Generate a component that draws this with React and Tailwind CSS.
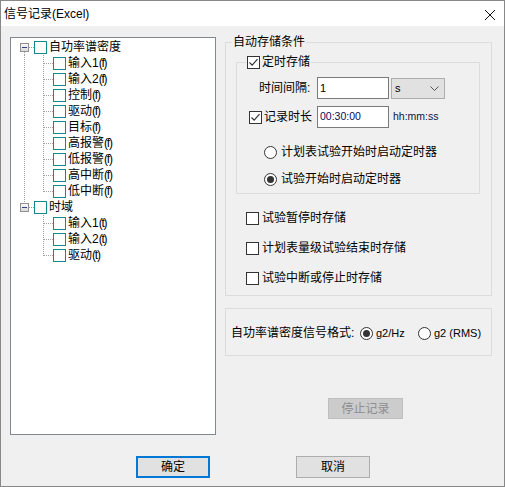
import React from "react";

const F = "font-['Liberation_Sans','Noto_Sans_CJK_SC',sans-serif]";

function WinCheck({ checked }) {
  return (
    <span className="w-[13px] h-[13px] border border-[#333333] bg-white flex items-center justify-center shrink-0">
      {checked && (
        <svg width="11" height="11" viewBox="0 0 11 11">
          <path d="M1.5 5.5 L4.2 8.2 L9.5 2.2" stroke="#333333" strokeWidth="1.2" fill="none" />
        </svg>
      )}
    </span>
  );
}

function WinRadio({ checked }) {
  return (
    <span className="w-[13px] h-[13px] rounded-full border border-[#333333] bg-white flex items-center justify-center shrink-0">
      {checked && <span className="w-[7px] h-[7px] rounded-full bg-[#333333]" />}
    </span>
  );
}

const DOT = { stroke: "#a0a0a0", strokeDasharray: "1 1", strokeWidth: 1 };

function RootRow({ label, first, last }) {
  return (
    <div className="flex items-center h-4">
      <svg width="23" height="16" className="shrink-0">
        <defs>
          <linearGradient id="exg" x1="0" y1="0" x2="0" y2="1">
            <stop offset="0" stopColor="#fbfbfb" />
            <stop offset="1" stopColor="#d8d8d8" />
          </linearGradient>
        </defs>
        {!first && <line x1="13.5" y1="0" x2="13.5" y2="4" {...DOT} />}
        {!last && <line x1="13.5" y1="13" x2="13.5" y2="16" {...DOT} />}
        <line x1="18" y1="8.5" x2="23" y2="8.5" {...DOT} />
        <rect x="9.5" y="4.5" width="8" height="8" fill="url(#exg)" stroke="#919191" />
        <line x1="11" y1="8.5" x2="16" y2="8.5" stroke="#33418f" strokeWidth="1" />
      </svg>
      <span className="w-[13px] h-[13px] border border-[#138a8a] bg-white shrink-0" />
      <span className="ml-[2px] text-[12px] leading-[16px] text-black whitespace-nowrap">{label}</span>
    </div>
  );
}

function ChildRow({ name, suffix, rootContinues, lastChild }) {
  return (
    <div className="flex items-center h-4">
      <svg width="42" height="16" className="shrink-0">
        {rootContinues && <line x1="13.5" y1="0" x2="13.5" y2="16" {...DOT} />}
        <line x1="32.5" y1="0" x2="32.5" y2={lastChild ? 9 : 16} {...DOT} />
        <line x1="33" y1="8.5" x2="42" y2="8.5" {...DOT} />
      </svg>
      <span className="w-[13px] h-[13px] border border-[#138a8a] bg-white shrink-0" />
      <span className="ml-[2px] text-[12px] leading-[16px] text-black whitespace-nowrap">
        {name}
        <span className="tracking-[-1.2px]">{suffix}</span>
      </span>
    </div>
  );
}

const tree = [
  {
    label: "自功率谱密度",
    children: ["输入1", "输入2", "控制", "驱动", "目标", "高报警", "低报警", "高中断", "低中断"],
    suffix: "(f)",
  },
  { label: "时域", children: ["输入1", "输入2", "驱动"], suffix: "(t)" },
];

export default function App() {
  return (
    <div className={`${F} w-[505px] h-[487px] border border-[#888888] flex flex-col bg-[#f0f0f0] text-black overflow-hidden`}>
      {/* title bar */}
      <div className="h-[25px] bg-white flex items-center justify-between pl-[3px] pr-[8px] shrink-0">
        <span className="text-[12px] leading-[14px] mt-[1px]">信号记录(Excel)</span>
        <svg width="12" height="12" viewBox="0 0 12 12" className="mt-[2px]">
          <path d="M1 1 L11 11 M11 1 L1 11" stroke="#111111" strokeWidth="1" fill="none" />
        </svg>
      </div>

      {/* body */}
      <div className="flex items-start">
        {/* tree */}
        <div className="ml-[9px] mt-[11px] w-[206px] h-[398px] border border-[#828790] bg-white pt-[1px] flex flex-col">
          {tree.map((r, ri) => (
            <React.Fragment key={r.label}>
              <RootRow label={r.label} first={ri === 0} last={ri === tree.length - 1} />
              {r.children.map((c, ci) => (
                <ChildRow
                  key={c}
                  name={c}
                  suffix={r.suffix}
                  rootContinues={ri !== tree.length - 1}
                  lastChild={ci === r.children.length - 1}
                />
              ))}
            </React.Fragment>
          ))}
        </div>

        {/* right column */}
        <div className="ml-[9px] mt-[16px] flex flex-col">
          {/* group 1 */}
          <div className="w-[267px] h-[254px] border border-[#dcdcdc] flex flex-col">
            <span className="-mt-[8px] ml-[6px] self-start bg-[#f0f0f0] px-[1px] h-[14px] text-[12px] leading-[14px]">
              自动存储条件
            </span>

            {/* inner group */}
            <div className="mt-[13px] ml-[10px] mr-[11px] h-[132px] border border-[#dcdcdc] flex flex-col">
              <div className="-mt-[8px] ml-[9px] self-start bg-[#f0f0f0] px-[1px] h-[14px] flex items-center">
                <WinCheck checked />
                <span className="ml-[2px] text-[12px] leading-[14px]">定时存储</span>
              </div>

              <div className="mt-[8px] h-[22px] flex items-start">
                <span className="ml-[22px] w-[58px] h-[22px] flex items-center text-[12px] leading-[14px]">时间间隔:</span>
                <div className="w-[72px] h-[22px] border border-[#7a7a7a] bg-white pl-[2px] flex items-center text-[11px]">
                  1
                </div>
                <div className="ml-[2px] mt-[1px] w-[54px] h-[21px] border border-[#adadad] bg-[#e1e1e1] flex items-center justify-between pl-[3px] pr-[5px] text-[11px]">
                  <span>s</span>
                  <svg width="9" height="5" viewBox="0 0 9 5">
                    <path d="M0.5 0.5 L4.5 4.5 L8.5 0.5" stroke="#555555" strokeWidth="1" fill="none" />
                  </svg>
                </div>
              </div>

              <div className="mt-[7px] h-[22px] flex items-center">
                <div className="ml-[12px] w-[68px] flex items-center">
                  <WinCheck checked />
                  <span className="ml-[2px] text-[12px] leading-[14px]">记录时长</span>
                </div>
                <div className="w-[72px] h-[22px] border border-[#7a7a7a] bg-white pl-[2px] flex items-center text-[10.5px] text-[#0c0c5a]">
                  00:30:00
                </div>
                <span className="ml-[4px] text-[10.5px] text-[#101040]">hh:mm:ss</span>
              </div>

              <div className="mt-[16px] ml-[27px] h-4 flex items-center">
                <WinRadio />
                <span className="ml-[4px] text-[12px] leading-[14px]">计划表试验开始时启动定时器</span>
              </div>
              <div className="mt-[11px] ml-[27px] h-4 flex items-center">
                <WinRadio checked />
                <span className="ml-[4px] text-[12px] leading-[14px]">试验开始时启动定时器</span>
              </div>
            </div>

            <div className="mt-[16px] ml-[20px] h-4 flex items-center">
              <WinCheck />
              <span className="ml-[3px] text-[12px] leading-[14px]">试验暂停时存储</span>
            </div>
            <div className="mt-[14px] ml-[20px] h-4 flex items-center">
              <WinCheck />
              <span className="ml-[3px] text-[12px] leading-[14px]">计划表量级试验结束时存储</span>
            </div>
            <div className="mt-[14px] ml-[20px] h-4 flex items-center">
              <WinCheck />
              <span className="ml-[3px] text-[12px] leading-[14px]">试验中断或停止时存储</span>
            </div>
          </div>

          {/* group 2 */}
          <div className="mt-[12px] w-[267px] h-[48px] border border-[#dcdcdc] flex items-center pl-[5px] pt-[2px]">
            <span className="w-[129px] text-[12px] leading-[14px] whitespace-nowrap">自功率谱密度信号格式:</span>
            <div className="w-[58px] flex items-center">
              <WinRadio checked />
              <span className="ml-[3px] text-[11px] leading-[14px]">g2/Hz</span>
            </div>
            <div className="flex items-center">
              <WinRadio />
              <span className="ml-[3px] text-[11px] leading-[14px]">g2 (RMS)</span>
            </div>
          </div>

          {/* stop button */}
          <div className="mt-[42px] ml-[103px] w-[75px] h-[21px] border border-[#bfbfbf] bg-[#cccccc] flex items-center justify-center text-[12px] leading-[14px] text-[#8d8d8d]">
            停止记录
          </div>
        </div>
      </div>

      {/* bottom buttons */}
      <div className="mt-[21px] flex">
        <div className="ml-[135px] w-[74px] h-[22px] border-2 border-[#0078d7] bg-[#e1e1e1] flex items-center justify-center text-[12px] leading-[14px]">
          确定
        </div>
        <div className="ml-[86px] w-[74px] h-[22px] border border-[#adadad] bg-[#e1e1e1] flex items-center justify-center text-[12px] leading-[14px]">
          取消
        </div>
      </div>
    </div>
  );
}
